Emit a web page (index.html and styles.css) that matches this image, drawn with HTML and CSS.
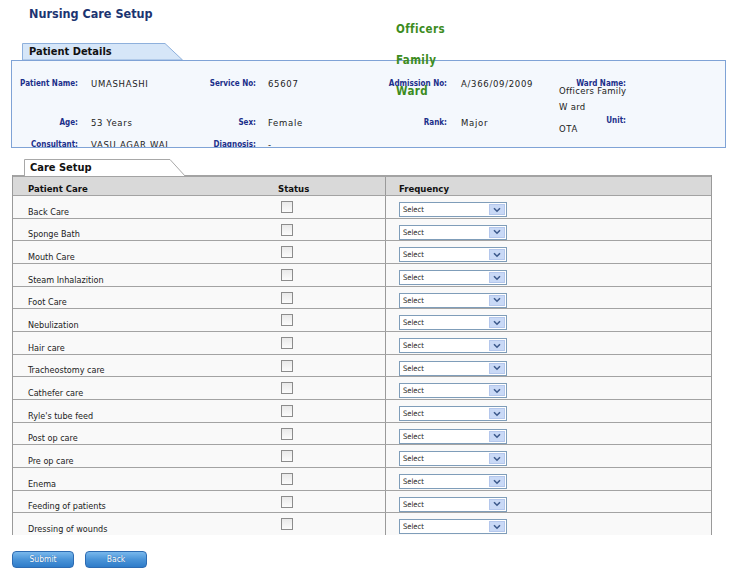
FILE: index.html
```html
<!DOCTYPE html>
<html>
<head>
<meta charset="utf-8">
<link rel="stylesheet" href="styles.css">
</head>
<body>
<div class="page">
  <div class="header">
    <h1 class="title">Nursing Care Setup</h1>
  </div>
  <div class="ward-overlay">Officers<br>Family<br>Ward</div>

  <div class="tab tab-blue">
    <svg class="tab-bg" width="161" height="17" viewBox="0 0 161 17"><polygon points="0.5,17 0.5,0.5 143,0.5 160.5,17" fill="#d6e6f8" stroke="#8eb0dc" stroke-width="1"/></svg>
    <span class="tab-text">Patient Details</span>
  </div>
  <div class="panel">
    <div class="pgrid">
      <div class="lbl">Patient Name:</div>
      <div class="val">UMASHASHI</div>
      <div class="lbl">Service No:</div>
      <div class="val">65607</div>
      <div class="lbl">Admission No:</div>
      <div class="val">A/366/09/2009</div>
      <div class="wcell">
        <div class="lbl">Ward Name:</div>
        <div class="wval">Officers Family<br>W ard</div>
      </div>

      <div class="lbl">Age:</div>
      <div class="val">53 Years</div>
      <div class="lbl">Sex:</div>
      <div class="val">Female</div>
      <div class="lbl">Rank:</div>
      <div class="val">Major</div>
      <div class="wcell">
        <div class="lbl unit">Unit:</div>
        <div class="wval ota">OTA</div>
      </div>

      <div class="lbl">Consultant:</div>
      <div class="val">VASU AGAR WAL</div>
      <div class="lbl">Diagnosis:</div>
      <div class="val">-</div>
      <div></div><div></div><div></div>
    </div>
  </div>

  <div class="tab tab-grey">
    <svg class="tab-bg" width="162" height="17" viewBox="0 0 162 17"><polygon points="0.5,17.5 0.5,0.5 146,0.5 161.5,17.5" fill="#ffffff" stroke="#a8a8a8" stroke-width="1"/></svg>
    <span class="tab-text">Care Setup</span>
  </div>
  <div class="care">
    <div class="crow chead">
      <div class="c1">Patient Care</div>
      <div class="c2">Status</div>
      <div class="c3">Frequency</div>
    </div>
    <div id="rows"></div>
  </div>

  <div class="buttons">
    <div class="btn">Submit</div>
    <div class="btn">Back</div>
  </div>
</div>
<script src="app.js"></script>
</body>
</html>
```
FILE: app.js
```js
var items = ["Back Care","Sponge Bath","Mouth Care","Steam Inhalazition","Foot Care","Nebulization","Hair care","Tracheostomy care","Cathefer care","Ryle's tube feed","Post op care","Pre op care","Enema","Feeding of patients","Dressing of wounds"];
var host = document.getElementById('rows');
var html = '';
items.forEach(function (t) {
  html += '<div class="crow"><div class="c1"><span class="ctext">' + t.replace("'", "&#39;") + '</span></div>' +
    '<div class="c2"><span class="chk"></span></div>' +
    '<div class="c3"><div class="sel"><span class="sel-text">Select</span><span class="sel-btn"><svg width="8" height="6" viewBox="0 0 8 6"><path d="M1 1.2 L4 4.2 L7 1.2" fill="none" stroke="#3d5a8c" stroke-width="1.6"/></svg></span></div></div></div>';
});
host.innerHTML = html;
```
FILE: styles.css
```css
* { box-sizing: border-box; }
html, body { margin: 0; padding: 0; background: #ffffff; }
body {
  font-family: "DejaVu Sans Condensed", "DejaVu Sans", sans-serif;
  color: #222;
  width: 734px;
  height: 578px;
  overflow: hidden;
}
.page { position: relative; width: 734px; }

.header { height: 43px; padding: 6px 0 0 29px; }
.title {
  margin: 0;
  font-size: 12.5px;
  line-height: 15px;
  font-weight: bold;
  color: #1b3471;
}

.ward-overlay {
  position: absolute;
  left: 396px;
  top: 14px;
  z-index: 5;
  font-size: 11.5px;
  font-weight: bold;
  line-height: 31px;
  letter-spacing: 0.4px;
  color: #3c8c1e;
}

.tab { position: relative; height: 17px; }
.tab-bg { position: absolute; left: 0; top: 0; }
.tab-text {
  position: relative;
  display: block;
  font-size: 11px;
  font-weight: bold;
  line-height: 17px;
  color: #111;
}
.tab-blue { margin-left: 22px; width: 161px; }
.tab-blue .tab-text { padding-left: 7px; line-height: 18px; }
.tab-grey { margin-left: 24px; margin-top: 11px; width: 162px; height: 16px; }
.tab-grey .tab-text { padding-left: 6px; line-height: 18px; }

.panel {
  margin-left: 11px;
  width: 715px;
  height: 88px;
  border: 1px solid #7fa3d6;
  background: #f4f8fd;
  overflow: hidden;
  padding-top: 17px;
  position: relative;
  z-index: 1;
}
.pgrid {
  display: grid;
  grid-template-columns: 69px 110px 68px 122px 69px 96px 85px;
  grid-template-rows: 39px 22px 22px;
}
.lbl {
  font-size: 8px;
  font-weight: bold;
  color: #1b2f8a;
  text-align: right;
  line-height: 11px;
  padding-right: 3px;
  white-space: nowrap;
}
.val {
  font-family: "DejaVu Sans", sans-serif;
  font-size: 8.5px;
  line-height: 11px;
  padding-top: 1px;
  letter-spacing: 0.7px;
  color: #222;
  white-space: nowrap;
}
.pgrid .val { padding-left: 10px; }
.pgrid > .val:nth-child(4), .pgrid > .val:nth-child(11), .pgrid > .val:nth-child(18) { padding-left: 9px; }
.pgrid > .val:nth-child(6), .pgrid > .val:nth-child(13) { padding-left: 11px; }
.wcell .lbl { padding-right: 5px; }
.wval {
  font-family: "DejaVu Sans", sans-serif;
  font-size: 8.5px;
  line-height: 16px;
  margin-top: -6px;
  padding-left: 13px;
  letter-spacing: 0.3px;
  color: #222;
  white-space: nowrap;
}
.unit { margin-top: -2.5px; }
.wval.ota { margin-top: -4.5px; letter-spacing: 0.6px; }

.care {
  margin-left: 12px;
  width: 700px;
  height: 360px;
  border-left: 1px solid #9a9a9a;
  border-right: 1px solid #9a9a9a;
  overflow: hidden;
}
.crow {
  display: grid;
  grid-template-columns: 249px 123px 326px;
  height: 22.68px;
  border-bottom: 1px solid #a3a3a3;
  background: #f9f9f9;
}
.crow > div { position: relative; }
.chead {
  height: 21px;
  background: #d9d9d9;
  border-top: 2px solid #a3a3a3;
  border-bottom: 1px solid #a3a3a3;
  font-size: 9.5px;
  font-weight: bold;
  color: #111;
  line-height: 12px;
}
.chead > div { padding-top: 6px; }
.chead .c1 { padding-left: 15px; }
.chead .c2 { padding-left: 16px; }
.c3 { border-left: 1px solid #9a9a9a; padding-left: 13px; }
.chead .c3 { padding-left: 13px; }

.c1 { padding-left: 15px; }
.ctext {
  position: absolute;
  left: 15px;
  bottom: 0px;
  font-size: 9px;
  line-height: 11px;
  color: #222;
  white-space: nowrap;
}
.c2 { padding-left: 19px; padding-top: 5px; }
.chk {
  display: block;
  width: 12px;
  height: 12px;
  border: 1px solid #8c8c8c;
  background: linear-gradient(#e9e9e9, #fbfbfb);
}
.crow .c3 { padding-top: 6px; }
.sel {
  display: flex;
  align-items: center;
  justify-content: space-between;
  width: 108px;
  height: 15px;
  border: 1px solid #7f9db9;
  background: #fff;
  padding: 0 1px 0 3px;
}
.sel-text {
  font-size: 7.5px;
  line-height: 13px;
  color: #222;
}
.sel-btn {
  display: flex;
  align-items: center;
  justify-content: center;
  width: 16px;
  height: 11px;
  background: #c9d9f6;
  border: 1px solid #b4c7ec;
}
.sel-btn svg { display: block; }

.buttons {
  display: flex;
  gap: 11px;
  margin: 16px 0 0 12px;
}
.btn {
  width: 62px;
  height: 17px;
  border: 1px solid #2d6bb2;
  border-radius: 4px;
  background: linear-gradient(#79b8ec, #4a94d8 50%, #2f7cc9);
  color: #fff;
  font-size: 8.5px;
  line-height: 15px;
  text-align: center;
  text-shadow: 0 0 1px #1d5a9a;
}
```
